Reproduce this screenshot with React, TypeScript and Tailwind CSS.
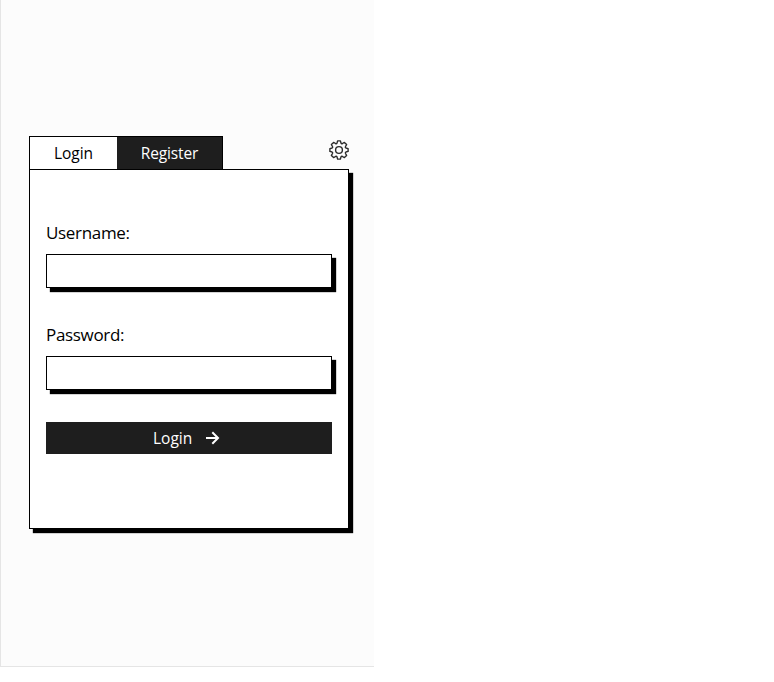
import type { ReactNode } from 'react';

function GearIcon() {
  return (
    <svg width="20" height="20" viewBox="0 0 20 20" fill="none" stroke="currentColor" strokeWidth="1.4" strokeLinejoin="round">
      <path d="M8.6 .9H11.4L12 3.1Q12.5 4 13.5 3.5L15.4 2.4L17.6 4.6L16.5 6.5Q16 7.5 16.9 8L19.1 8.6V11.4L16.9 12Q16 12.5 16.5 13.5L17.6 15.4L15.4 17.6L13.5 16.5Q12.5 16 12 16.9L11.4 19.1H8.6L8 16.9Q7.5 16 6.5 16.5L4.6 17.6L2.4 15.4L3.5 13.5Q4 12.5 3.1 12L.9 11.4V8.6L3.1 8Q4 7.5 3.5 6.5L2.4 4.6L4.6 2.4L6.5 3.5Q7.5 4 8 3.1Z" />
      <circle cx="10" cy="10" r="3.4" />
    </svg>
  );
}

function Field({ label, type }: { label: ReactNode; type: string }) {
  return (
    <label className="block h-[102px]">
      <span className="block h-6 text-[17px] leading-6 tracking-[-0.32px]">{label}</span>
      <input
        type={type}
        className="mt-[9px] block h-[34px] w-[286px] border border-black bg-white px-2 shadow-[4px_4px_1px_#000] outline-none"
      />
    </label>
  );
}

export default function App() {
  return (
    <div className="h-[682px] w-[774px] overflow-hidden bg-white font-['Open_Sans','Noto_Sans',sans-serif] text-black">
      <main className="h-[667px] w-[374px] border-b border-l border-[#e5e5e5] bg-[#fcfcfc] pl-7 pt-[136px]">
        <header className="flex h-[33px] w-80 items-start justify-between">
          <nav className="flex h-[33px] w-[194px] border border-b-0 border-black text-[15.5px]">
            <button className="h-8 w-[87px] bg-white pt-px leading-[31px]">Login</button>
            <button className="h-8 flex-1 bg-[#1e1e1e] pt-px leading-[31px] tracking-[-0.15px] text-white">Register</button>
          </nav>
          <button aria-label="Settings" className="mt-1 text-[#2b2b2b]">
            <GearIcon />
          </button>
        </header>
        <form className="h-[360px] w-80 border border-black bg-white pl-4 pt-[51px] shadow-[4px_4px_1px_#000]">
          <Field label="Username:" type="text" />
          <Field label="Password:" type="password" />
          <button type="button" className="-mt-[3px] flex h-8 w-[286px] items-center bg-[#1e1e1e] pl-[107px] text-[15.5px] text-white">
            <span className="w-[52px] pt-[2px] text-left">Login</span>
            <svg width="16" height="16" viewBox="0 0 16 16" fill="none" stroke="currentColor" strokeWidth="2">
              <path d="M1 8h12M7.3 2.3l5.7 5.7-5.7 5.7" />
            </svg>
          </button>
        </form>
      </main>
    </div>
  );
}
